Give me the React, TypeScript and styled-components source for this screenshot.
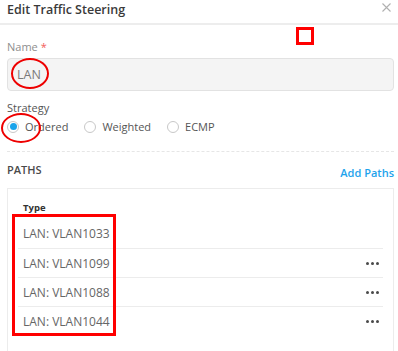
import React from "react";
import styled, { createGlobalStyle } from "styled-components";

const Global = createGlobalStyle`
  html, body { margin: 0; padding: 0; background: #fff; }
  body { font-family: "Open Sans", "Noto Sans", sans-serif; width: 398px; height: 351px; overflow: hidden; }
`;

const Page = styled.div`
  position: relative;
  width: 398px;
  height: 351px;
  overflow: hidden;
  background: #fff;
`;

const Header = styled.div`
  display: flex;
  align-items: center;
  justify-content: space-between;
  height: 23px;
  padding: 0 7px;
  border-bottom: 2px solid #ededed;
`;

const Title = styled.div`
  font-size: 12.5px;
  font-weight: 600;
  color: #3a3a3a;
  margin-top: -4px;
`;

const Close = styled.div`
  align-self: flex-start;
  width: 9px;
  height: 9px;
  margin-top: 3px;
  margin-right: 0px;
  line-height: 0;
`;

const Body = styled.div`
  padding: 4px 4px 0 7px;
`;

const Label = styled.div<{ $muted?: boolean }>`
  font-size: 11px;
  color: ${(p) => (p.$muted ? "#8e8e8e" : "#555")};
  line-height: 16px;
`;

const Star = styled.span`
  color: #f25c5c;
`;

const Input = styled.div`
  margin-top: 3px;
  height: 31px;
  border: 1px solid #e2e2e2;
  border-radius: 4px;
  background: #f4f4f4;
  display: flex;
  align-items: center;
  padding-left: 9px;
  font-size: 12.5px;
  color: #7a7a7a;
`;

const Field = styled.div<{ $gap: number }>`
  margin-top: ${(p) => p.$gap}px;
`;

const RadioRow = styled.div`
  display: flex;
  align-items: center;
  gap: 16px;
  margin-top: 3px;
  padding-bottom: 17px;
  border-bottom: 1px dashed #e6e6e6;
`;

const RadioItem = styled.label`
  display: flex;
  align-items: center;
  gap: 6px;
  font-size: 11px;
  color: #555;
`;

const RadioCircle = styled.span<{ $checked?: boolean }>`
  box-sizing: border-box;
  width: 12px;
  height: 12px;
  border-radius: 50%;
  border: 1px solid #c8c8c8;
  background: #fff;
  display: flex;
  align-items: center;
  justify-content: center;
  &::after {
    content: "";
    display: ${(p) => (p.$checked ? "block" : "none")};
    width: 7px;
    height: 7px;
    border-radius: 50%;
    background: #1aa3ea;
  }
`;

const SectionHead = styled.div`
  display: flex;
  justify-content: space-between;
  align-items: flex-end;
  margin-top: 8px;
`;

const SectionTitle = styled.div`
  font-size: 11px;
  font-weight: 600;
  color: #4a4a4a;
  margin-top: 2px;
`;

const AddLink = styled.div`
  font-size: 11px;
  font-weight: 600;
  color: #1ea3ec;
  margin-bottom: -3px;
`;

const Table = styled.div`
  margin-top: 11px;
  border: 1px solid #ececec;
  border-bottom: none;
  padding: 13px 10px 0 10px;
  height: 200px;
`;

const TypeHead = styled.div`
  font-size: 9.5px;
  font-weight: 700;
  color: #333;
  padding-left: 5px;
  line-height: 12px;
  margin-bottom: 5px;
`;

const Row = styled.div<{ $first?: boolean }>`
  box-sizing: border-box;
  display: flex;
  align-items: center;
  justify-content: space-between;
  height: 29px;
  padding-left: 5px;
  padding-right: 4px;
  border-top: ${(p) => (p.$first ? "none" : "1px solid #ececec")};
  font-size: 12px;
  color: #666;
`;

const Dots = styled.div`
  display: flex;
  gap: 2px;
  span {
    width: 3px;
    height: 3px;
    border-radius: 50%;
    background: #4a4a4a;
  }
`;

const Ellipse = styled.div<{ $x: number; $y: number; $w: number; $h: number }>`
  position: absolute;
  left: ${(p) => p.$x}px;
  top: ${(p) => p.$y}px;
  width: ${(p) => p.$w}px;
  height: ${(p) => p.$h}px;
  border: 2.5px solid #ee0000;
  border-radius: 50%;
  box-sizing: border-box;
`;

const Box = styled.div<{ $x: number; $y: number; $w: number; $h: number }>`
  position: absolute;
  left: ${(p) => p.$x}px;
  top: ${(p) => p.$y}px;
  width: ${(p) => p.$w}px;
  height: ${(p) => p.$h}px;
  border: 3px solid #ff0000;
  box-sizing: border-box;
`;

const rows = ["LAN: VLAN1033", "LAN: VLAN1099", "LAN: VLAN1088", "LAN: VLAN1044"];

export default function App() {
  return (
    <Page>
      <Global />
      <Header>
        <Title>Edit Traffic Steering</Title>
        <Close>
          <svg width="9" height="9" viewBox="0 0 9 9">
            <path d="M0.5 0.5 L8.5 8.5 M8.5 0.5 L0.5 8.5" stroke="#b0b0b0" strokeWidth="1.1" />
          </svg>
        </Close>
      </Header>
      <Body>
        <Field $gap={10}>
          <Label $muted>
            Name <Star>*</Star>
          </Label>
          <Input>LAN</Input>
        </Field>
        <Field $gap={9}>
          <Label>Strategy</Label>
          <RadioRow>
            <RadioItem>
              <RadioCircle $checked />
              Ordered
            </RadioItem>
            <RadioItem>
              <RadioCircle />
              Weighted
            </RadioItem>
            <RadioItem>
              <RadioCircle />
              ECMP
            </RadioItem>
          </RadioRow>
        </Field>
        <SectionHead>
          <SectionTitle>PATHS</SectionTitle>
          <AddLink>Add Paths</AddLink>
        </SectionHead>
        <Table>
          <TypeHead>Type</TypeHead>
          {rows.map((r, i) => (
            <Row key={r} $first={i === 0}>
              <span>{r}</span>
              {i > 0 && (
                <Dots>
                  <span />
                  <span />
                  <span />
                </Dots>
              )}
            </Row>
          ))}
        </Table>
      </Body>
      <Box $x={296} $y={27} $w={18} $h={18} />
      <Ellipse $x={11} $y={58} $w={38} $h={31} />
      <Ellipse $x={1} $y={113} $w={40} $h={30} />
      <Box $x={12} $y={214} $w={104} $h={122} />
    </Page>
  );
}
